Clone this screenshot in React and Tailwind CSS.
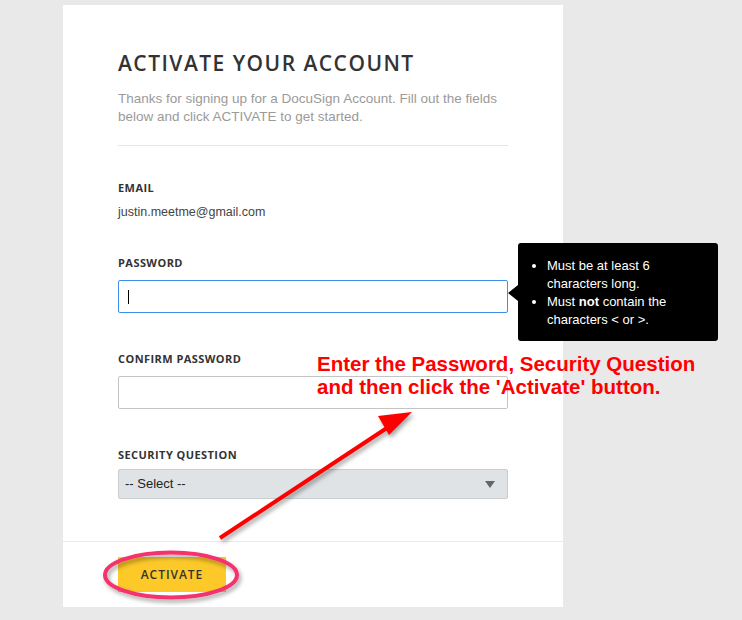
const LABEL = 'text-[11px] font-bold uppercase tracking-[0.04em] text-[#333] leading-[16px] font-["Open_Sans",sans-serif]'

function Field({ label, top, children }) {
  return (
    <div style={{ marginTop: top }}>
      <div className={LABEL}>{label}</div>
      {children}
    </div>
  )
}

export default function App() {
  return (
    <div className="relative h-[620px] w-[742px] overflow-hidden bg-[#e9e9e9] pt-[5px] font-['Liberation_Sans',Arial,sans-serif]">
      <div className="ml-[63px] flex h-[602px] w-[500px] flex-col bg-white">
        <div className="pl-[55px] pt-[44px] w-[445px]">
          <h1 className="text-[21px] leading-[28px] font-semibold tracking-[0.07em] text-[#333] font-['Open_Sans',sans-serif]">
            ACTIVATE YOUR ACCOUNT
          </h1>
          <p className="mt-[13px] w-[390px] text-[13.5px] leading-[18px] text-[#9a9a9a]">
            Thanks for signing up for a DocuSign Account. Fill out the fields below and click ACTIVATE to get started.
          </p>
          <div className="mt-[19px] h-px w-[390px] bg-[#e6e6e6]" />

          <Field label="Email" top={34}>
            <div className="mt-[7px] text-[12.5px] leading-[18px] text-[#444]">justin.meetme@gmail.com</div>
          </Field>

          <Field label="Password" top={34}>
            <div className="mt-[9px] flex h-[33px] w-[390px] items-center rounded-[2px] border border-[#3d8ee8] px-[9px]">
              <div className="h-[14px] w-px bg-black" />
            </div>
          </Field>

          <Field label="Confirm Password" top={38}>
            <div className="mt-[9px] h-[33px] w-[390px] rounded-[2px] border border-[#c4c4c4]" />
          </Field>

          <Field label="Security Question" top={38}>
            <div className="mt-[6px] flex h-[30px] w-[390px] items-center justify-between rounded-[2px] border border-[#c9cdd0] bg-[#dfe3e5] pl-[6px] pr-[12px] text-[13px] text-[#222]">
              <span>-- Select --</span>
              <svg width="10" height="7" viewBox="0 0 10 7"><path d="M0 0h10L5 7z" fill="#666" /></svg>
            </div>
          </Field>
        </div>

        <div className="mt-[42px] h-px w-full bg-[#e9e9e9]" />
        <div className="pl-[55px] pt-[15px]">
          <div className="flex h-[35px] w-[108px] items-center justify-center bg-[#fcc929] text-[12px] font-semibold tracking-[0.08em] text-[#333] font-['Open_Sans',sans-serif]">
            ACTIVATE
          </div>
        </div>
      </div>

      {/* password tooltip */}
      <div className="absolute left-[518px] top-[243px] h-[98px] w-[200px] rounded-[3px] bg-black pl-[29px] pr-[14px] pt-[14px] text-[13px] leading-[18px] text-white">
        <svg className="absolute left-[-10px] top-[42px]" width="10" height="16" viewBox="0 0 10 16"><path d="M10 0L0 8l10 8z" fill="#000" /></svg>
        <ul className="list-disc pl-0">
          <li>Must be at least 6 characters long.</li>
          <li>Must <b>not</b> contain the characters &lt; or &gt;.</li>
        </ul>
      </div>

      {/* annotation */}
      <div className="absolute left-[317px] top-[352px] text-[20.5px] font-bold leading-[23px] text-[#ff0000]">
        <div>Enter the Password, Security Question</div>
        <div>and then click the 'Activate' button.</div>
      </div>

      <svg className="pointer-events-none absolute left-0 top-0" width="742" height="620">
        <defs>
          <filter id="sh" x="-20%" y="-20%" width="140%" height="140%">
            <feDropShadow dx="2" dy="3" stdDeviation="2" floodColor="#000" floodOpacity="0.35" />
          </filter>
        </defs>
        <g filter="url(#sh)">
          <line x1="220" y1="538" x2="396" y2="422" stroke="#ff0000" strokeWidth="4" />
          <path d="M412 412L389 435L378 416z" fill="#ff0000" />
          <ellipse cx="171" cy="575" rx="66" ry="22.5" fill="none" stroke="#f4336e" strokeWidth="4" />
        </g>
      </svg>
    </div>
  )
}
